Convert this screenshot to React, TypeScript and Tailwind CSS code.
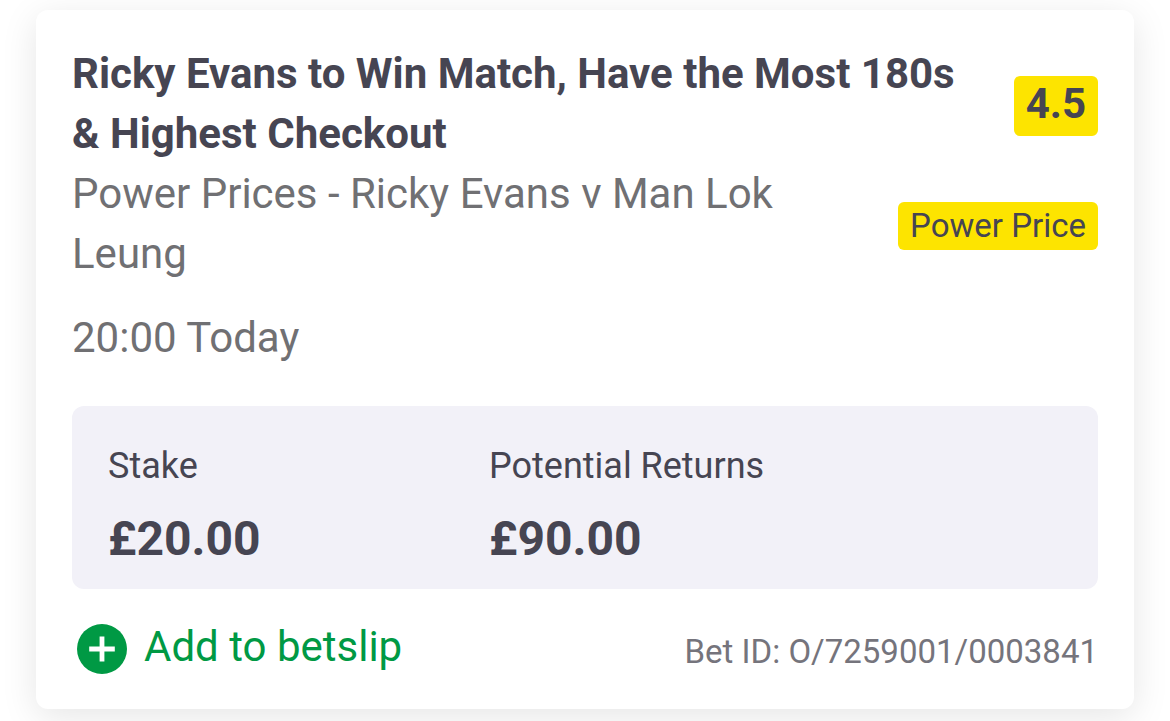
interface StatProps {
  label: string;
  value: string;
}

function Stat({ label, value }: StatProps) {
  return (
    <div>
      <dt className="text-[36px] leading-12">{label}</dt>
      <dd className="mt-[21px] text-5xl leading-14 font-bold">{value}</dd>
    </div>
  );
}

function AddIcon() {
  return (
    <svg viewBox="0 0 50 50" className="size-[50px]" aria-hidden="true">
      <circle cx="25" cy="25" r="25" fill="#009944" />
      <path d="M25 12.5v25M12.2 25h25.6" stroke="#fff" strokeWidth="4.8" />
    </svg>
  );
}

export default function App() {
  return (
    <main className="min-h-screen bg-white px-9 pt-[10px] pb-3 font-[Roboto,sans-serif] text-[#464552]">
      <article className="rounded-xl bg-white px-9 pt-[34px] pb-[35px] shadow-[0_8px_36px_rgba(0,0,0,0.1)]">
        <div className="flex items-start justify-between">
          <div className="max-w-[900px] text-[42px] leading-[60px] text-[#707073]">
            <h1 className="font-bold text-[#464552]">
              Ricky Evans to Win Match, Have the Most 180s &amp; Highest Checkout
            </h1>
            <p className="max-w-[760px]">Power Prices - Ricky Evans v Man Lok Leung</p>
            <p className="mt-6">20:00 Today</p>
          </div>
          <div className="-ml-24 flex shrink-0 flex-col items-end pt-8">
            <span className="rounded-md bg-[#fde400] px-3 pb-1 text-[42px] leading-14 font-bold">4.5</span>
            <span className="mt-[66px] rounded-md bg-[#fde400] px-3 text-[33px] leading-12">Power Price</span>
          </div>
        </div>

        <dl className="mt-[38px] grid grid-cols-[381px_1fr] rounded-xl bg-[#f2f1f8] px-9 pt-9 pb-[22px]">
          <Stat label="Stake" value="£20.00" />
          <Stat label="Potential Returns" value="£90.00" />
        </dl>

        <div className="mt-[31px] flex items-end justify-between">
          <button type="button" className="flex items-end gap-[17px] pl-[5px] text-[42px] leading-[54px] text-[#009944]">
            <AddIcon />
            Add to betslip
          </button>
          <p className="text-[33px] leading-11 text-[#75747c]">Bet ID: O/7259001/0003841</p>
        </div>
      </article>
    </main>
  );
}
